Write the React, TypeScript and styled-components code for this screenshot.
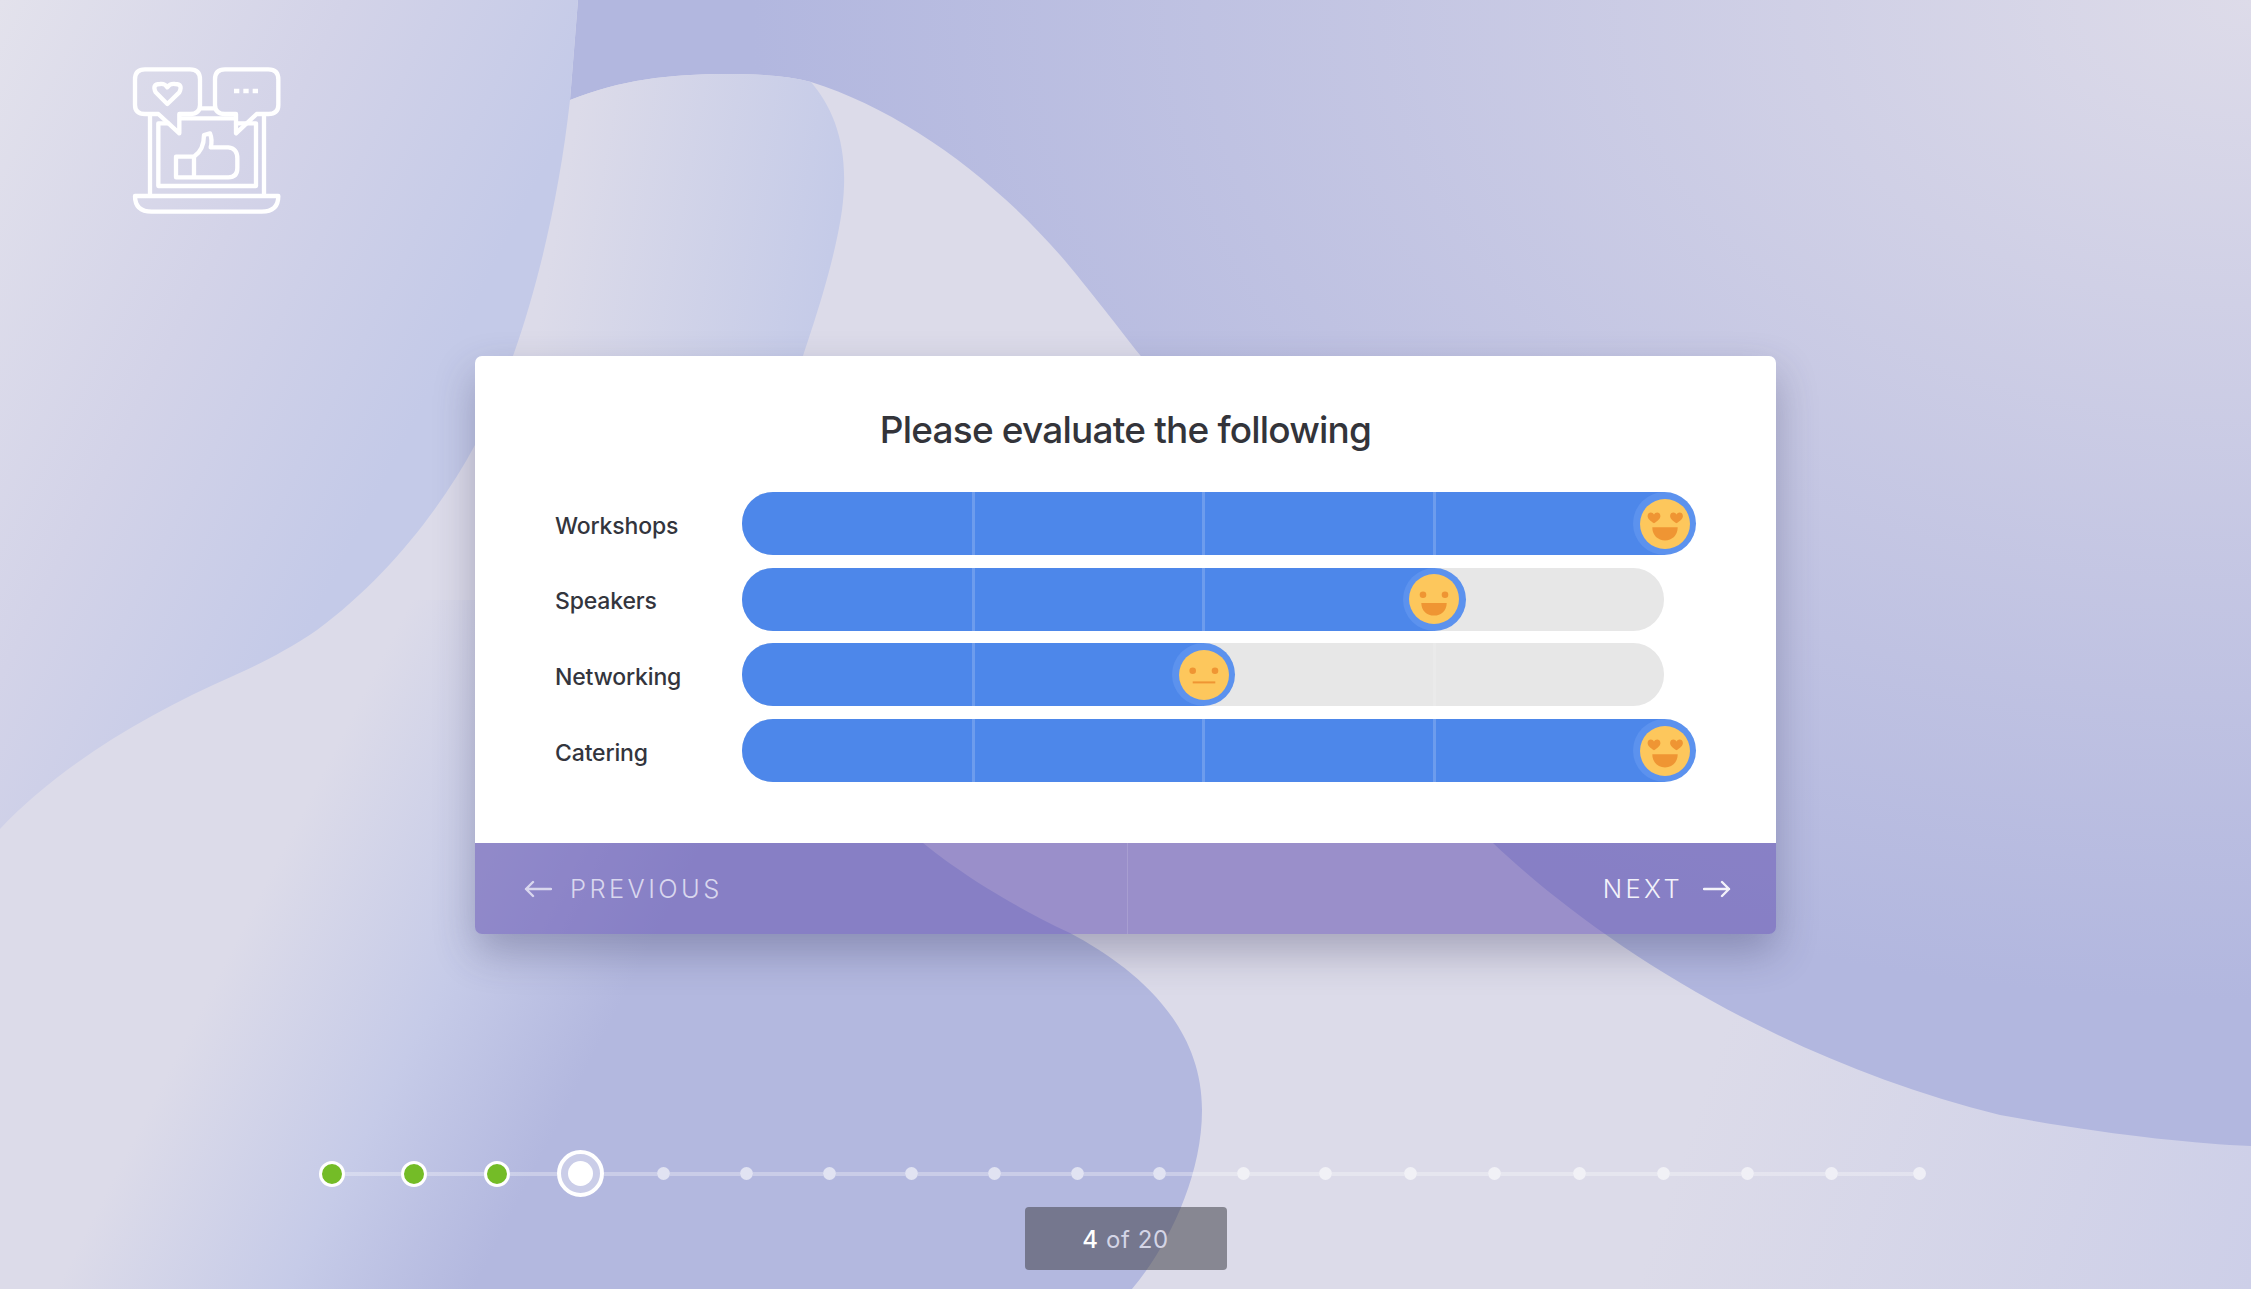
import styled, { createGlobalStyle } from 'styled-components';

const GlobalStyle = createGlobalStyle`
    html, body {
        margin: 0;
        padding: 0;
        background: #dcdbe9;
        font-family: 'Inter', 'Liberation Sans', sans-serif;
    }
`

const Page = styled.div`
    position: relative;
    width: 2251px;
    height: 1289px;
    overflow: hidden;
    padding-top: 40px;
    box-sizing: border-box;
`

const Backdrop = styled.svg`
    position: absolute;
    top: 0;
    left: 0;
    width: 2251px;
    height: 1289px;
`

const Content = styled.div`
    position: relative;
    display: flex;
    flex-direction: column;
`

const LogoMark = styled.svg`
    display: block;
    width: 220px;
    height: 200px;
    margin-left: 100px;
`

const Card = styled.section`
    width: 1301px;
    margin: 116px auto 0;
    border-radius: 7px;
    overflow: hidden;
    box-shadow: 0 18px 40px rgba(50, 50, 90, 0.32);
`

const Survey = styled.div`
    height: 487px;
    box-sizing: border-box;
    padding-top: 49px;
    background: #fff;
`

const Title = styled.h1`
    margin: 0 0 37px;
    height: 50px;
    line-height: 50px;
    text-align: center;
    font-size: 37px;
    font-weight: 500;
    letter-spacing: -0.8px;
    color: #33343a;
`

const Rows = styled.div`
    display: flex;
    flex-direction: column;
    gap: 12.7px;
    padding-left: 80px;
`

const Row = styled.div`
    display: flex;
    align-items: center;
`

const Label = styled.span`
    width: 187px;
    padding-top: 4px;
    font-size: 23px;
    font-weight: 500;
    letter-spacing: -0.15px;
    color: #33353d;
`

const Track = styled.div`
    position: relative;
    width: 922px;
    height: 63px;
    border-radius: 31px;
    background: #e7e7e7;
`

const Fill = styled.div<{ $value: number }>`
    height: 100%;
    width: ${p => p.$value}%;
    border-radius: 31px 0 0 31px;
    background: #4d87ea;
`

const Tick = styled.i<{ $at: number, $filled: boolean }>`
    position: absolute;
    top: 0;
    bottom: 0;
    left: ${p => p.$at}%;
    width: 3px;
    margin-left: -1px;
    background: rgba(255, 255, 255, ${p => (p.$filled ? 0.18 : 0.15)});
`

const Thumb = styled.div<{ $value: number }>`
    position: absolute;
    top: 0;
    left: ${p => p.$value}%;
    width: 63px;
    height: 63px;
    margin-left: -31px;
    border-radius: 50%;
    background: #5c92ee;
    display: flex;
    align-items: center;
    justify-content: center;
`

const Face = styled.svg`
    display: block;
    width: 50px;
    height: 50px;
`

const Footer = styled.div`
    display: flex;
    height: 91px;
    background: rgba(98, 80, 176, 0.54);
`

const NavButton = styled.button<{ $next?: boolean }>`
    flex: 1;
    display: flex;
    align-items: center;
    gap: ${p => (p.$next ? 20 : 18)}px;
    justify-content: ${p => (p.$next ? 'flex-end' : 'flex-start')};
    padding: ${p => (p.$next ? '0 45px 0 0' : '0 0 0 49px')};
    border: none;
    border-left: ${p => (p.$next ? '1px solid rgba(255, 255, 255, 0.14)' : 'none')};
    background: transparent;
    font-family: inherit;
    font-size: 25.5px;
    font-weight: 300;
    letter-spacing: 3.4px;
    color: ${p => (p.$next ? '#f3f2fa' : '#d9d7ee')};
`

const Arrow = styled.svg`
    display: block;
    width: 28px;
    height: 18px;
    fill: none;
    stroke: currentColor;
    stroke-width: 2.4;
    stroke-linecap: round;
    stroke-linejoin: round;
`

const Progress = styled.div`
    display: flex;
    align-items: center;
    height: 47px;
    margin: 216px 0 0 319px;
`

const Connector = styled.div`
    height: 4px;
    background: rgba(255, 255, 255, 0.3);
`

const DoneDot = styled.div`
    width: 20px;
    height: 20px;
    flex: none;
    border: 3px solid #fff;
    border-radius: 50%;
    background: #74bc27;
`

const CurrentDot = styled.div`
    width: 47px;
    height: 47px;
    flex: none;
    box-sizing: border-box;
    border: 4px solid #fff;
    border-radius: 50%;
    display: flex;
    align-items: center;
    justify-content: center;
    background: rgba(255, 255, 255, 0.3);
    &::after {
        content: '';
        width: 25px;
        height: 25px;
        border-radius: 50%;
        background: #fff;
    }
`

const TodoDot = styled.div`
    width: 13px;
    height: 13px;
    flex: none;
    border-radius: 50%;
    background: rgba(255, 255, 255, 0.6);
`

const Badge = styled.div`
    align-self: center;
    width: 202px;
    height: 63px;
    box-sizing: border-box;
    padding-top: 2px;
    margin-top: 10px;
    border-radius: 4px;
    background: rgba(65, 66, 75, 0.55);
    display: flex;
    align-items: center;
    justify-content: center;
    font-size: 24px;
    letter-spacing: 0.6px;
    color: #d4d5e6;
`

const BadgeCount = styled.b`
    font-weight: 500;
    color: #fff;
`

const Heart = ({ x, y }: { x: number, y: number }) => (
    <path
        fill="#ef9533"
        transform={`translate(${x} ${y})`}
        d="M0 5.8C-3.6 3.4-6.4 1.2-6.4-1.6-6.4-3.8-4.8-5-3.2-5-1.8-5-0.6-4.2 0-3 0.6-4.2 1.8-5 3.2-5 4.8-5 6.4-3.8 6.4-1.6 6.4 1.2 3.6 3.4 0 5.8Z"
    />
)

const Emoji = ({ mood }: { mood: 'love' | 'happy' | 'neutral' }) => (
    <Face viewBox="-25 -25 50 50">
        <circle r="25" fill="#fdc75c" />
        {mood === 'love' && (
            <>
                <Heart x={-11} y={-6.5} />
                <Heart x={11.5} y={-6.5} />
                <path fill="#ef9533" d="M-12.7 3.3H12.7C12.7 11.5 7 16.4 0 16.4S-12.7 11.5-12.7 3.3Z" />
            </>
        )}
        {mood === 'happy' && (
            <>
                <circle cx="-11" cy="-4.3" r="3.3" fill="#ef9533" />
                <circle cx="11" cy="-4.3" r="3.3" fill="#ef9533" />
                <path fill="#ef9533" d="M-12.7 4H12.7C12.7 11.8 7 16.6 0 16.6S-12.7 11.8-12.7 4Z" />
            </>
        )}
        {mood === 'neutral' && (
            <>
                <circle cx="-11.3" cy="-4.3" r="3.3" fill="#ef9533" />
                <circle cx="11" cy="-4.3" r="3.3" fill="#ef9533" />
                <rect x="-11.3" y="6.4" width="22.6" height="2" fill="#ef9533" />
            </>
        )}
    </Face>
)

const ratings: { label: string, value: number, mood: 'love' | 'happy' | 'neutral' }[] = [
    { label: 'Workshops', value: 100, mood: 'love' },
    { label: 'Speakers', value: 75, mood: 'happy' },
    { label: 'Networking', value: 50, mood: 'neutral' },
    { label: 'Catering', value: 100, mood: 'love' },
]

// centres of the 20 progress dots as measured, they are not quite evenly spaced
const stops = [332, 414, 497, 580, 663, 746, 829, 911, 994, 1077, 1159, 1243, 1325, 1410, 1494, 1579, 1663, 1747, 1831, 1919]
const current = 3

const dotSize = (i: number) => (i < current ? 26 : i === current ? 47 : 13)

const App = () => {
    return (
        <Page>
            <GlobalStyle />
            <Backdrop viewBox="0 0 2251 1289">
                <defs>
                    <linearGradient id="base" gradientUnits="userSpaceOnUse" x1="1700" y1="1100" x2="2251" y2="1289">
                        <stop offset="0" stopColor="#dcdbe9" />
                        <stop offset="1" stopColor="#cdcfe8" />
                    </linearGradient>
                    <radialGradient id="upper" gradientUnits="userSpaceOnUse" cx="0" cy="0" r="1" gradientTransform="translate(2251 0) scale(1500 1000)">
                        <stop offset="0" stopColor="#dddbe9" />
                        <stop offset="1" stopColor="#b2b7df" />
                    </radialGradient>
                    <linearGradient id="left" gradientUnits="userSpaceOnUse" x1="0" y1="0" x2="500" y2="256">
                        <stop offset="0" stopColor="#e3e2ec" />
                        <stop offset="0.55" stopColor="#d3d3e8" />
                        <stop offset="1" stopColor="#c4cae8" />
                    </linearGradient>
                    <linearGradient id="band" gradientUnits="userSpaceOnUse" x1="570" y1="150" x2="840" y2="200">
                        <stop offset="0" stopColor="#dcdbe9" />
                        <stop offset="1" stopColor="#c5cbe8" />
                    </linearGradient>
                    <linearGradient id="lower" gradientUnits="userSpaceOnUse" x1="210" y1="990" x2="540" y2="1160">
                        <stop offset="0" stopColor="#dcdbe9" />
                        <stop offset="0.55" stopColor="#c6cbe8" />
                        <stop offset="1" stopColor="#b3b8df" />
                    </linearGradient>
                </defs>
                <rect width="2251" height="1289" fill="url(#base)" />
                <path fill="url(#upper)" d="M578 0L570 100C620 80 670 74 727 74C760 74 790 76 811 82C900 110 990 175 1060 255C1090 290 1120 330 1140 355L1493 843C1600 945 1780 1060 2000 1115C2110 1135 2190 1143 2251 1146V0Z" />
                <path fill="url(#band)" d="M570 100C620 80 670 74 727 74C760 74 790 76 811 82C835 110 850 150 842 210C835 260 815 320 803 356H513C540 280 560 190 570 100Z" />
                <path fill="url(#lower)" d="M900 600L923 843C950 865 1000 900 1070 933C1130 965 1202 1020 1202 1110C1202 1180 1165 1250 1132 1289H0V600Z" />
                <path fill="url(#left)" d="M0 0H578L570 100C560 190 540 280 513 356L475 445C440 510 385 580 317 630C285 652 255 666 233 676C150 712 60 765 0 829Z" />
            </Backdrop>
            <Content>
                <LogoMark viewBox="0 0 660 600" fill="none" stroke="#fff" strokeWidth="13" strokeLinejoin="round" strokeLinecap="round">
                    <path d="M135 88H270Q300 88 300 118V195Q300 222 270 222H238V280L175 222H135Q105 222 105 195V118Q105 88 135 88Z" />
                    <path d="M375 88H505Q535 88 535 118V195Q535 222 505 222H470L408 280V222H375Q345 222 345 195V118Q345 88 375 88Z" />
                    <path d="M202 192L167 157Q155 132 180 132Q195 130 202 142Q210 130 225 132Q250 132 238 157Z" />
                    <path strokeLinecap="butt" d="M402 153H418M430 153H446M458 153H474" />
                    <path d="M150 225V465M492 225V465" />
                    <path d="M105 468H535Q535 515 485 515H155Q105 515 105 468Z" />
                    <path d="M205 250H175V438H468V250H408" />
                    <path d="M300 205H345M240 235H405" />
                    <path d="M282 350Q312 330 312 285L330 280Q338 300 332 322H385Q412 325 412 355V385Q412 412 385 412H228V350H282V412" />
                </LogoMark>
                <Card>
                    <Survey>
                        <Title>Please evaluate the following</Title>
                        <Rows>
                            {ratings.map(r => (
                                <Row key={r.label}>
                                    <Label>{r.label}</Label>
                                    <Track>
                                        <Fill $value={r.value} />
                                        {[25, 50, 75].map(at => (
                                            <Tick key={at} $at={at} $filled={at < r.value} />
                                        ))}
                                        <Thumb $value={r.value}><Emoji mood={r.mood} /></Thumb>
                                    </Track>
                                </Row>
                            ))}
                        </Rows>
                    </Survey>
                    <Footer>
                        <NavButton>
                            <Arrow viewBox="0 0 28 18"><path d="M27 9H2M9 2L2 9L9 16" /></Arrow>
                            PREVIOUS
                        </NavButton>
                        <NavButton $next>
                            NEXT
                            <Arrow viewBox="0 0 28 18"><path d="M1 9H26M19 2L26 9L19 16" /></Arrow>
                        </NavButton>
                    </Footer>
                </Card>
                <Progress>
                    {stops.map((x, i) => (
                        <Stop key={x} i={i} />
                    ))}
                </Progress>
                <Badge>
                    <span><BadgeCount>4</BadgeCount> of 20</span>
                </Badge>
            </Content>
        </Page>
    )
}

const Stop = ({ i }: { i: number }) => {
    const next = stops[i + 1]
    const gap = next ? next - stops[i] - dotSize(i) / 2 - dotSize(i + 1) / 2 : 0
    return (
        <>
            {i < current && <DoneDot />}
            {i === current && <CurrentDot />}
            {i > current && <TodoDot />}
            {next && <Connector style={{ width: gap }} />}
        </>
    )
}

export default App
